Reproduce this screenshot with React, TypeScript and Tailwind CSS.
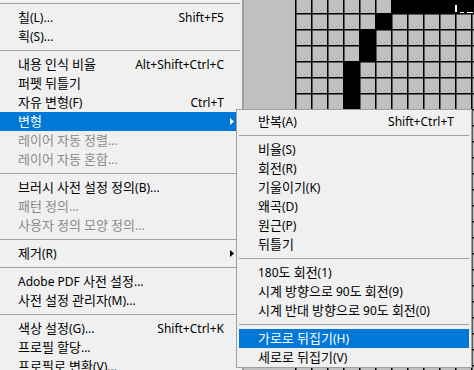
import React from "react";

type Item =
  | { sep: true }
  | {
      sep?: false;
      label: string;
      shortcut?: string;
      sub?: boolean;
      disabled?: boolean;
      active?: boolean;
    };

const mainItems: Item[] = [
  { sep: true },
  { label: "칠(L)...", shortcut: "Shift+F5" },
  { label: "획(S)..." },
  { sep: true },
  { label: "내용 인식 비율", shortcut: "Alt+Shift+Ctrl+C" },
  { label: "퍼펫 뒤틀기" },
  { label: "자유 변형(F)", shortcut: "Ctrl+T" },
  { label: "변형", sub: true, active: true },
  { label: "레이어 자동 정렬...", disabled: true },
  { label: "레이어 자동 혼합...", disabled: true },
  { sep: true },
  { label: "브러시 사전 설정 정의(B)..." },
  { label: "패턴 정의...", disabled: true },
  { label: "사용자 정의 모양 정의...", disabled: true },
  { sep: true },
  { label: "제거(R)", sub: true },
  { sep: true },
  { label: "Adobe PDF 사전 설정..." },
  { label: "사전 설정 관리자(M)..." },
  { sep: true },
  { label: "색상 설정(G)...", shortcut: "Shift+Ctrl+K" },
  { label: "프로필 할당..." },
  { label: "프로필로 변환(V)..." },
];

const subItems: Item[] = [
  { label: "반복(A)", shortcut: "Shift+Ctrl+T" },
  { sep: true },
  { label: "비율(S)" },
  { label: "회전(R)" },
  { label: "기울이기(K)" },
  { label: "왜곡(D)" },
  { label: "원근(P)" },
  { label: "뒤틀기" },
  { sep: true },
  { label: "180도 회전(1)" },
  { label: "시계 방향으로 90도 회전(9)" },
  { label: "시계 반대 방향으로 90도 회전(0)" },
  { sep: true },
  { label: "가로로 뒤집기(H)", active: true },
  { label: "세로로 뒤집기(V)" },
];

// hangul in the menu font runs a bit wider than the latin part
function Label({ text }: { text: string }) {
  const parts = text.split(/([\uac00-\ud7a3]+)/);
  return (
    <span>
      {parts.map((p, i) =>
        /[\uac00-\ud7a3]/.test(p) ? (
          <span key={i} className="text-[13px]">
            {p}
          </span>
        ) : (
          <React.Fragment key={i}>{p}</React.Fragment>
        )
      )}
    </span>
  );
}

function Arrow({ white }: { white?: boolean }) {
  return (
    <svg width="4" height="7" viewBox="0 0 4 7" className="absolute right-[6px] top-[6px]">
      <path d="M0 0 L4 3.5 L0 7 Z" fill={white ? "#fff" : "#000"} />
    </svg>
  );
}

function MenuRow({ item, padL, padR }: { item: Item; padL: string; padR: string }) {
  if (item.sep) {
    return (
      <div className="h-[9px] pt-[4px]">
        <div className="h-px bg-[#a0a0a0]" />
      </div>
    );
  }
  const color = item.active
    ? "bg-[#0078d7] text-white"
    : item.disabled
    ? "text-[#8a8a8a]"
    : "text-black";
  return (
    <div className={`relative flex h-[19px] items-center justify-between whitespace-nowrap ${padL} ${padR} ${color}`}>
      <Label text={item.label} />
      {item.shortcut && <span>{item.shortcut}</span>}
      {item.sub && <Arrow white={item.active} />}
    </div>
  );
}

function PixelCanvas() {
  const cols = Array.from({ length: 12 }, (_, i) => 51 + i * 16);
  const rows = Array.from({ length: 24 }, (_, i) => 13 + i * 16);
  return (
    <svg width="230" height="370" viewBox="0 0 230 370" className="block">
      <rect width="230" height="370" fill="#c0c0c0" />
      {cols.map((x) => (
        <rect key={"v" + x} x={x} y={0} width="1.5" height="370" fill="#000" />
      ))}
      {rows.map((y) => (
        <rect key={"h" + y} x={51} y={y} width="179" height="1.5" fill="#000" />
      ))}
      <rect x={147} y={0} width="83" height="14" fill="#000" />
      <rect x={131} y={13} width="17" height="17" fill="#000" />
      <rect x={115} y={29} width="17" height="33" fill="#000" />
      <rect x={99} y={61} width="17" height="49" fill="#000" />
      <rect x={211} y={5} width="2" height="7" fill="#fff" />
      <rect x={216} y={12} width="4" height="1" fill="#fff" />
      <rect x={223} y={12} width="6" height="1" fill="#fff" />
    </svg>
  );
}

export default function App() {
  return (
    <div className="relative flex h-[370px] w-[474px] overflow-hidden bg-[#c0c0c0] text-[12px] [font-family:'Noto_Sans','Noto_Sans_CJK_KR',sans-serif]">
      {/* main menu (cropped at the top) */}
      <div className="w-[244px] shrink-0 border-r-2 border-[#a0a0a0] bg-[#f0f0f0]">
        <div className="-mt-px pr-[2px]">
          {mainItems.map((item, i) => (
            <MenuRow key={i} item={item} padL="pl-[18px]" padR="pr-[16px]" />
          ))}
        </div>
      </div>

      <PixelCanvas />

      {/* 변형 submenu */}
      <div className="absolute left-[236px] top-[109px] w-[236px] border border-[#a0a0a0] bg-[#f0f0f0] px-[2px] pt-[2px]">
        {subItems.map((item, i) => (
          <MenuRow key={i} item={item} padL="pl-[19px]" padR="pr-[15px]" />
        ))}
      </div>
    </div>
  );
}
